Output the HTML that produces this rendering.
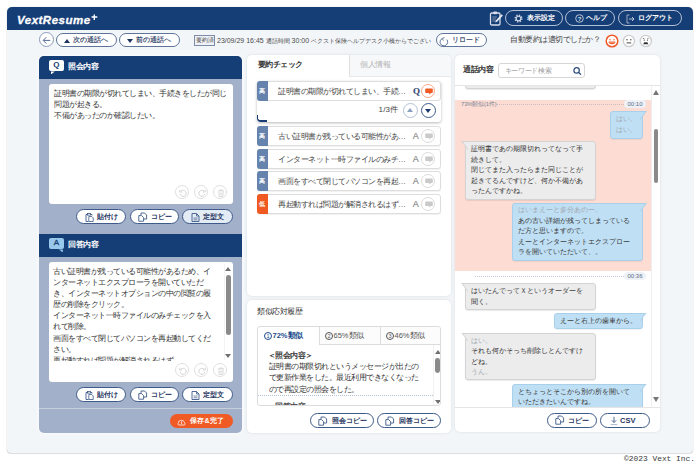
<!DOCTYPE html>
<html><head><meta charset="utf-8">
<style>
*{box-sizing:border-box;margin:0;padding:0}
html,body{width:700px;height:463px;overflow:hidden;background:#fff;font-family:"Liberation Sans",sans-serif;color:#333}
div,span,svg{position:absolute;white-space:nowrap}
.j{font-size:8px;letter-spacing:-0.5px}
#outer{left:7px;top:7px;width:686px;height:445.5px;background:#f3f6f9;border-radius:5px 5px 4px 4px;box-shadow:0 0 1px rgba(0,0,0,.35),0 1px 1px rgba(0,0,0,.1)}
#hdr{left:7px;top:7px;width:686px;height:22.5px;background:#163e76;border-radius:5px 5px 0 0}
.logo{left:17px;top:14.5px;font:italic bold 11.5px/11.5px "Liberation Sans",sans-serif;color:#fff;letter-spacing:0.5px;-webkit-text-stroke:0.3px #fff}
.hbtn{top:10px;height:16px;border:1.2px solid #b4c0d4;border-radius:8px;color:#fff;font-size:7px;font-weight:bold;line-height:13.6px}
.tbtn{top:33px;height:14px;border:1px solid #5f7499;border-radius:8px;background:#fff;color:#1f3560;font-size:7px;line-height:12px;-webkit-text-stroke:0.15px #1f3560}
.panel{background:#a2b1c9;border-radius:5px;overflow:hidden;box-shadow:0 0 4px rgba(255,255,255,.9)}
.ph{left:0;width:203px;height:23px;background:#163e76;color:#fff;font-size:8px;font-weight:bold;letter-spacing:-0.3px}
.ph .t{left:29px;top:5.5px;line-height:10px}
.ico{left:9.9px;top:4.4px;width:15px;height:11px;border-radius:2px;font-size:8px;font-weight:bold;text-align:center;line-height:10.6px;color:#173b72;letter-spacing:0}
.ico:after{content:"";position:absolute;left:2px;bottom:-3px;width:4px;height:3px;background:inherit;clip-path:polygon(0 0,100% 0,0 100%)}
.ico.a:after{left:10px;clip-path:polygon(0 0,100% 0,100% 100%)}
.ta{background:#fff;border-radius:3px;font-size:8px;letter-spacing:-0.5px;line-height:11.1px;color:#333}
.pbtn{height:15px;border:1px solid #3d5a88;border-radius:8px;background:#fff;color:#1f3560;font-size:7px;font-weight:bold;line-height:13px}
.card{background:#fff;border-radius:5px;box-shadow:0 0 3px rgba(0,0,0,.1)}
.uico{width:14px;height:14px;border:1px solid #e0e0e0;border-radius:50%}
.item{left:10px;width:184px;height:20px;border:1px solid #dedede;border-radius:3px;background:#fff;color:#444;box-shadow:0 1px 1px rgba(0,0,0,.06)}
.item .b{left:-1px;top:-1px;width:10.5px;height:20px;background:#6683ad;color:#fff;font-size:6px;text-align:center;line-height:20px;border-radius:3px 0 0 3px;-webkit-text-stroke:0.2px #fff}
.item .tx{left:20px;top:4px;line-height:11px;font-size:8px;letter-spacing:-0.5px}
.item .qa{left:154.8px;top:3.3px;line-height:11px;color:#8c8c8c;font-size:9px;-webkit-text-stroke:0.2px #8c8c8c}
.item .ci{left:163.3px;top:1.7px;width:14px;height:14px;border:1px solid #dcdcdc;border-radius:50%}
.bub{font-size:7px;letter-spacing:0;line-height:10.6px;color:#333;border-radius:3px}
.gb{background:#ececec;border:1px solid #d3d3d3;box-shadow:0 1px 1px rgba(0,0,0,.08)}
.bb{background:#bfdff4;border:1px solid #a9d0ea;box-shadow:0 1px 1px rgba(0,0,0,.06)}
.gr{color:#a0a8b0}
.gb:before{content:"";position:absolute;left:-5px;top:-1px;width:7px;height:9px;background:#d3d3d3;clip-path:polygon(0 0,100% 0,100% 100%)}
.gb:after{content:"";position:absolute;left:-3px;top:0;width:5px;height:7px;background:#ececec;clip-path:polygon(0 0,100% 0,100% 100%)}
.bb:before{content:"";position:absolute;right:-5px;top:-1px;width:7px;height:9px;background:#a9d0ea;clip-path:polygon(0 0,100% 0,0 100%)}
.bb:after{content:"";position:absolute;right:-3px;top:0;width:5px;height:7px;background:#bfdff4;clip-path:polygon(0 0,100% 0,0 100%)}
.sb{width:7px}
</style></head><body>
<div id="outer"></div>
<div id="hdr"></div>
<div class="logo">VextResume</div>
<svg style="left:91px;top:14px" width="7" height="7" viewBox="0 0 7 7"><path d="M3.3 0.5v5.5M0.5 3h5.8" stroke="#fff" stroke-width="1.4"/></svg>

<!-- header right -->
<svg style="left:488.5px;top:11px" width="15" height="15" viewBox="0 0 15 15"><rect x="1.5" y="2" width="9.5" height="12" rx="1.2" fill="none" stroke="#d6dde8" stroke-width="1.3"/><rect x="4.2" y="0.6" width="4" height="2.6" rx="1" fill="#d6dde8"/><path d="M3.3 6h4.5M3.3 8h3.5M3.3 10h3" stroke="#8d9bb3" stroke-width="0.9"/><path d="M6.2 11.5l0.6-2 5.8-6.2 1.3 1.2-5.8 6.2z" fill="#e6ebf2"/></svg>
<div class="hbtn" style="left:505px;width:58px"><svg style="left:7.5px;top:2.6px" width="9" height="9" viewBox="0 0 9 9"><circle cx="4.5" cy="4.5" r="3.3" fill="none" stroke="#cdd6e3" stroke-width="1.5" stroke-dasharray="1.3 1.29"/><circle cx="4.5" cy="4.5" r="2.3" fill="none" stroke="#cdd6e3" stroke-width="1.1"/></svg><span style="left:21px;top:0">表示設定</span></div>
<div class="hbtn" style="left:565px;width:50px"><svg style="left:8.5px;top:2.5px" width="9" height="9" viewBox="0 0 9 9"><circle cx="4.5" cy="4.5" r="3.8" fill="none" stroke="#dfe5ee" stroke-width="0.8"/><text x="4.5" y="6.9" font-size="6" text-anchor="middle" fill="#dfe5ee" font-family="Liberation Sans">?</text></svg><span style="left:19.5px;top:0">ヘルプ</span></div>
<div class="hbtn" style="left:618px;width:64px"><svg style="left:7px;top:2.5px" width="10" height="10" viewBox="0 0 10 10"><path d="M3.5 1H1v8h2.5" fill="none" stroke="#b9c4d6" stroke-width="0.8"/><path d="M3 5h5M6 3l2 2-2 2" fill="none" stroke="#dfe5ee" stroke-width="0.8"/></svg><span style="left:19px;top:0">ログアウト</span></div>

<!-- toolbar -->
<div class="tbtn" style="left:38.5px;top:32px;width:15px;height:15px;border-radius:50%;border-color:#8a9bb8"><svg style="left:2.5px;top:2.5px" width="9" height="9" viewBox="0 0 9 9"><path d="M8.3 4.4H1.5M4.3 1.2L1.2 4.4 4.3 7.6" fill="none" stroke="#3d5a88" stroke-width="0.9"/></svg></div>
<div class="tbtn" style="left:56px;width:61px"><svg style="left:7px;top:5px" width="6" height="4" viewBox="0 0 6 4"><path d="M0 4L3 0 6 4z" fill="#1f3560"/></svg><span style="left:15.5px;top:0">次の通話へ</span></div>
<div class="tbtn" style="left:119px;width:61px"><svg style="left:7px;top:5px" width="6" height="4" viewBox="0 0 6 4"><path d="M0 0L6 0 3 4z" fill="#1f3560"/></svg><span style="left:15.5px;top:0">前の通話へ</span></div>
<div style="left:194px;top:35px;width:21px;height:11px;border:1px solid #7d8cab;background:#eef1f6;font-size:6px;line-height:9px;color:#444;text-align:center">要約済</div>
<div style="left:217px;top:35.5px;font-size:7px;line-height:10px;color:#4a4a4a">23/09/29 16:45 <span style="position:static;font-size:6px">通話時間</span> 30:00 <span style="position:static;font-size:6px">ベクスト保険ヘルプデスク小橋からでござい</span></div>
<div class="tbtn" style="left:436px;width:51px"><svg style="left:2px;top:3px" width="10" height="10" viewBox="0 0 10 10"><path d="M7.8 2.6A3.8 3.8 0 1 1 3.4 1.5" fill="none" stroke="#5f7499" stroke-width="1"/><path d="M5.6 0.6L3.2 1.4 4.4 3.6" fill="none" stroke="#5f7499" stroke-width="0.9"/></svg><span style="left:15px;top:0">リロード</span></div>
<div class="j" style="left:510px;top:35px;line-height:10px;color:#444">自動要約は適切でしたか？</div>
<svg style="left:604.5px;top:33.5px" width="48" height="14" viewBox="0 0 48 14">
<circle cx="7" cy="7" r="5.8" fill="#fff" stroke="#ee5a2a" stroke-width="1.5"/><circle cx="5" cy="5.6" r="0.9" fill="#f49a7a"/><circle cx="9" cy="5.6" r="0.9" fill="#f49a7a"/><path d="M3.6 7.6h6.8a3.4 2.6 0 0 1-6.8 0z" fill="#ee5a2a"/><path d="M4.6 8.2h4.8" stroke="#fbd3c3" stroke-width="0.6"/>
<circle cx="23.9" cy="7" r="5.6" fill="#fff" stroke="#cfcfcf" stroke-width="1.4"/><circle cx="22" cy="5.8" r="0.8" fill="#555"/><circle cx="25.8" cy="5.8" r="0.8" fill="#555"/><path d="M21.6 8.9h4.6" stroke="#444" stroke-width="1"/>
<circle cx="40.8" cy="7" r="5.6" fill="#fff" stroke="#cfcfcf" stroke-width="1.4"/><path d="M38 4.3l1.4 0.6M43.6 4.3l-1.4 0.6" stroke="#555" stroke-width="0.8"/><circle cx="39.2" cy="6.2" r="0.6" fill="#555"/><circle cx="42.4" cy="6.2" r="0.6" fill="#555"/><path d="M38.2 10.3l1-2h3.2l1 2z" fill="#333"/>
</svg>

<!-- left panel -->
<div class="panel" style="left:39px;top:56px;width:203px;height:376.5px">
  <div class="ph" style="top:0"><div class="ico" style="background:#fff">Q</div><div class="t">照会内容</div></div>
  <div class="ta" style="left:10px;top:28px;width:183.5px;height:119.5px">
    <div style="left:5px;top:4px">証明書の期限が切れてしまい、手続きをしたが同じ<br>問題が起きる。<br>不備があったのか確認したい。</div>
    <div class="uico" style="left:125.5px;top:101px"><svg style="left:3px;top:3px" width="8" height="8" viewBox="0 0 8 8"><path d="M2 2.2A3 3 0 1 1 1.2 5" fill="none" stroke="#cfcfcf" stroke-width="0.9"/><path d="M0.8 0.8v2.2h2.2" fill="none" stroke="#cfcfcf" stroke-width="0.9"/></svg></div><div class="uico" style="left:144.5px;top:101px"><svg style="left:3px;top:3px" width="8" height="8" viewBox="0 0 8 8"><path d="M6 2.2A3 3 0 1 0 6.8 5" fill="none" stroke="#cfcfcf" stroke-width="0.9"/><path d="M7.2 0.8v2.2H5" fill="none" stroke="#cfcfcf" stroke-width="0.9"/></svg></div><div class="uico" style="left:163.5px;top:101px"><svg style="left:3px;top:2.5px" width="8" height="8" viewBox="0 0 8 8"><path d="M1 1.8h6M3 1.8V0.9h2v0.9M1.8 2.5l0.4 5h3.6l0.4-5" fill="none" stroke="#cfcfcf" stroke-width="0.8"/><path d="M3.3 3.5v2.8M4.7 3.5v2.8" stroke="#cfcfcf" stroke-width="0.6"/></svg></div>
  </div>
  <div class="pbtn" style="left:37px;top:153px;width:50px"><svg style="left:8px;top:2.5px" width="9" height="9" viewBox="0 0 9 9"><path d="M2.5 1.5H1v7h2.5M5.5 1.5H7v1" fill="none" stroke="#3d5a88" stroke-width="0.9"/><rect x="2.5" y="0.5" width="3" height="1.6" fill="none" stroke="#3d5a88" stroke-width="0.8"/><path d="M3.8 3.5h3l1.4 1.4v3.6H3.8z" fill="#fff" stroke="#3d5a88" stroke-width="0.8"/></svg><span style="left:20px;top:0">貼付け</span></div>
  <div class="pbtn" style="left:90.5px;top:153px;width:49px"><svg style="left:7px;top:1.5px" width="10" height="10" viewBox="0 0 10 10"><path d="M3 3V1h3.6L8.6 3v4H6" fill="none" stroke="#3d5a88" stroke-width="0.9"/><path d="M0.8 3.6h2.8l2 2v3.6H0.8z" fill="#fff" stroke="#3d5a88" stroke-width="0.9"/></svg><span style="left:20px;top:0">コピー</span></div>
  <div class="pbtn" style="left:143px;top:153px;width:51px;background:#e3ebf4"><svg style="left:8px;top:3px" width="9" height="9" viewBox="0 0 9 9"><path d="M1 0.5h4.5l2.5 2.5v5.5H1z" fill="none" stroke="#3d5a88" stroke-width="0.9"/><path d="M5.5 0.5v2.5H8" fill="none" stroke="#3d5a88" stroke-width="0.8"/><path d="M2.5 5h4M2.5 6.8h4" stroke="#3d5a88" stroke-width="0.7"/></svg><span style="left:20px;top:0">定型文</span></div>

  <div class="ph" style="top:178px"><div class="ico a" style="background:#98c8ec;font-weight:normal;-webkit-text-stroke:0.3px #173b72">A</div><div class="t">回答内容</div></div>
  <div class="ta" style="left:10px;top:206px;width:183.5px;height:119.5px;overflow:hidden">
    <div style="left:175px;top:2px;width:1px;height:96px;background:#f3f3f3"></div>
    <svg style="left:176px;top:4.5px" width="6" height="4" viewBox="0 0 6 4"><path d="M0 4L3 0 6 4z" fill="#707070"/></svg>
    <div style="left:177px;top:13px;width:4.5px;height:60px;background:#8a8a8a;border-radius:2.5px"></div>
    <svg style="left:176px;top:92px" width="6" height="4" viewBox="0 0 6 4"><path d="M0 0L6 0 3 4z" fill="#707070"/></svg>
    <div style="left:0;top:0;width:176px;height:99px;overflow:hidden"><div style="left:4px;top:4px">古い証明書が残っている可能性があるため、イ<br>ンターネットエクスプローラを開いていただ<br>き、インターネットオプションの中の閲覧の履<br>歴の削除をクリック。<br>インターネット一時ファイルのみチェックを入<br>れて削除。<br>画面をすべて閉じてパソコンを再起動してくだ<br>さい。<br>再起動すれば問題が解消されるはず</div></div>
    <div class="uico" style="left:125.5px;top:101px"><svg style="left:3px;top:3px" width="8" height="8" viewBox="0 0 8 8"><path d="M2 2.2A3 3 0 1 1 1.2 5" fill="none" stroke="#cfcfcf" stroke-width="0.9"/><path d="M0.8 0.8v2.2h2.2" fill="none" stroke="#cfcfcf" stroke-width="0.9"/></svg></div><div class="uico" style="left:144.5px;top:101px"><svg style="left:3px;top:3px" width="8" height="8" viewBox="0 0 8 8"><path d="M6 2.2A3 3 0 1 0 6.8 5" fill="none" stroke="#cfcfcf" stroke-width="0.9"/><path d="M7.2 0.8v2.2H5" fill="none" stroke="#cfcfcf" stroke-width="0.9"/></svg></div><div class="uico" style="left:163.5px;top:101px"><svg style="left:3px;top:2.5px" width="8" height="8" viewBox="0 0 8 8"><path d="M1 1.8h6M3 1.8V0.9h2v0.9M1.8 2.5l0.4 5h3.6l0.4-5" fill="none" stroke="#cfcfcf" stroke-width="0.8"/><path d="M3.3 3.5v2.8M4.7 3.5v2.8" stroke="#cfcfcf" stroke-width="0.6"/></svg></div>
  </div>
  <div class="pbtn" style="left:37px;top:331px;width:50px"><svg style="left:8px;top:2.5px" width="9" height="9" viewBox="0 0 9 9"><path d="M2.5 1.5H1v7h2.5M5.5 1.5H7v1" fill="none" stroke="#3d5a88" stroke-width="0.9"/><rect x="2.5" y="0.5" width="3" height="1.6" fill="none" stroke="#3d5a88" stroke-width="0.8"/><path d="M3.8 3.5h3l1.4 1.4v3.6H3.8z" fill="#fff" stroke="#3d5a88" stroke-width="0.8"/></svg><span style="left:20px;top:0">貼付け</span></div>
  <div class="pbtn" style="left:90.5px;top:331px;width:49px"><svg style="left:7px;top:1.5px" width="10" height="10" viewBox="0 0 10 10"><path d="M3 3V1h3.6L8.6 3v4H6" fill="none" stroke="#3d5a88" stroke-width="0.9"/><path d="M0.8 3.6h2.8l2 2v3.6H0.8z" fill="#fff" stroke="#3d5a88" stroke-width="0.9"/></svg><span style="left:20px;top:0">コピー</span></div>
  <div class="pbtn" style="left:143px;top:331px;width:51px"><svg style="left:8px;top:3px" width="9" height="9" viewBox="0 0 9 9"><path d="M1 0.5h4.5l2.5 2.5v5.5H1z" fill="none" stroke="#3d5a88" stroke-width="0.9"/><path d="M5.5 0.5v2.5H8" fill="none" stroke="#3d5a88" stroke-width="0.8"/><path d="M2.5 5h4M2.5 6.8h4" stroke="#3d5a88" stroke-width="0.7"/></svg><span style="left:20px;top:0">定型文</span></div>
  <div style="left:0;top:351.5px;width:203px;height:1.5px;background:#c6d0dd"></div>
  <div style="left:131px;top:357.5px;width:62.5px;height:14px;background:#f05a24;border-radius:7px;color:#fff;font-size:7px;font-weight:bold;line-height:14px"><svg style="left:7px;top:4px" width="9" height="8" viewBox="0 0 9 8"><path d="M2 7H7.2A1.3 1.3 0 0 0 7.4 4.6 2.8 2.8 0 0 0 3.4 2.6 1.8 1.8 0 0 0 1.6 4.7 1.2 1.2 0 0 0 2 7z" fill="none" stroke="#fff" stroke-width="0.8"/><path d="M4.5 3.2v2.8" stroke="#fff" stroke-width="0.7"/></svg><span style="left:20px;top:0;letter-spacing:0.2px">保存&amp;完了</span></div>
</div>

<!-- middle top card -->
<div class="card" style="left:247px;top:55.3px;width:203.5px;height:241.2px;overflow:hidden">
  <div style="left:102px;top:0;width:102px;height:22px;background:#f7f8fa;border-left:1px solid #e0e0e0;border-bottom:1px solid #e8e8e8"></div>
  <div class="j" style="left:10.5px;top:5px;line-height:10px;font-weight:bold;color:#333">要約チェック</div>
  <div class="j" style="left:113px;top:5px;line-height:10px;color:#b3b3b3">個人情報</div>
  <div style="left:10px;top:26px;width:184px;height:41px;background:#fff;border-radius:3px;box-shadow:0 1px 3px rgba(0,0,0,.28)"></div>
  <div style="left:10px;top:60px;width:10px;height:7px;border-left:1.5px solid #173b72;border-bottom:2px solid #173b72;border-radius:0 0 0 4px"></div>
  <div class="item" style="top:26px;box-shadow:none"><div class="b">高</div><div class="tx">証明書の期限が切れてしまい、手続…</div><div class="qa" style="color:#1b3b6f;font-family:'Liberation Serif',serif;font-size:9px;font-weight:bold;left:155px;top:4px">Q</div><div class="ci" style="border-color:#f6a98a"><svg style="left:2.5px;top:3px" width="8" height="7" viewBox="0 0 8 7"><path d="M1 0.5h6a0.8 0.8 0 0 1 0.8 0.8v3a0.8 0.8 0 0 1-0.8 0.8H5.5l-0.3 1.6-1.4-1.6H1a0.8 0.8 0 0 1-0.8-0.8v-3A0.8 0.8 0 0 1 1 0.5z" fill="#f05a22"/></svg></div></div>
  <div style="left:131.5px;top:50px;line-height:10px;color:#444;font-size:8px"><span style="position:static;letter-spacing:0.2px">1/3</span>件</div>
  <div class="uico" style="left:155.7px;top:47.5px;width:15px;height:15px;border-color:#b3c2d6"><svg style="left:3.5px;top:4.5px" width="6" height="4" viewBox="0 0 6 4"><path d="M0 4L3 0 6 4z" fill="#8aa0bf"/></svg></div>
  <div class="uico" style="left:173.5px;top:47.5px;width:15px;height:15px;border-color:#3d5a88"><svg style="left:3.5px;top:5px" width="6" height="4" viewBox="0 0 6 4"><path d="M0 0L6 0 3 4z" fill="#1b3b6f"/></svg></div>
  <div class="item" style="top:71px"><div class="b">高</div><div class="tx">古い証明書が残っている可能性があ…</div><div class="qa">A</div><div class="ci"><svg style="left:2.5px;top:3px" width="8" height="7" viewBox="0 0 8 7"><path d="M1 0.5h6a0.8 0.8 0 0 1 0.8 0.8v3a0.8 0.8 0 0 1-0.8 0.8H5.5l-0.3 1.6-1.4-1.6H1a0.8 0.8 0 0 1-0.8-0.8v-3A0.8 0.8 0 0 1 1 0.5z" fill="#cacaca"/></svg></div></div>
  <div class="item" style="top:94px"><div class="b">高</div><div class="tx">インターネット一時ファイルのみチ…</div><div class="qa">A</div><div class="ci"><svg style="left:2.5px;top:3px" width="8" height="7" viewBox="0 0 8 7"><path d="M1 0.5h6a0.8 0.8 0 0 1 0.8 0.8v3a0.8 0.8 0 0 1-0.8 0.8H5.5l-0.3 1.6-1.4-1.6H1a0.8 0.8 0 0 1-0.8-0.8v-3A0.8 0.8 0 0 1 1 0.5z" fill="#cacaca"/></svg></div></div>
  <div class="item" style="top:116px"><div class="b">高</div><div class="tx">画面をすべて閉じてパソコンを再起…</div><div class="qa">A</div><div class="ci"><svg style="left:2.5px;top:3px" width="8" height="7" viewBox="0 0 8 7"><path d="M1 0.5h6a0.8 0.8 0 0 1 0.8 0.8v3a0.8 0.8 0 0 1-0.8 0.8H5.5l-0.3 1.6-1.4-1.6H1a0.8 0.8 0 0 1-0.8-0.8v-3A0.8 0.8 0 0 1 1 0.5z" fill="#cacaca"/></svg></div></div>
  <div class="item" style="top:139px"><div class="b" style="background:#f05a22">低</div><div class="tx">再起動すれば問題が解消されるはず…</div><div class="qa">A</div><div class="ci"><svg style="left:2.5px;top:3px" width="8" height="7" viewBox="0 0 8 7"><path d="M1 0.5h6a0.8 0.8 0 0 1 0.8 0.8v3a0.8 0.8 0 0 1-0.8 0.8H5.5l-0.3 1.6-1.4-1.6H1a0.8 0.8 0 0 1-0.8-0.8v-3A0.8 0.8 0 0 1 1 0.5z" fill="#cacaca"/></svg></div></div>
</div>
<!-- middle bottom card -->
<div class="card" style="left:247px;top:300px;width:203.5px;height:132.7px;overflow:hidden">
  <div class="j" style="left:10px;top:7px;line-height:10px;color:#333">類似応対履歴</div>
  <div style="left:10px;top:26px;width:184px;height:80px;border:1px solid #dcdcdc;border-radius:3px;overflow:hidden">
    <div style="left:61px;top:0;width:122px;height:17.5px;background:#fcfcfc;border-left:1px solid #dcdcdc;border-bottom:1px solid #dcdcdc"></div>
    <div style="left:122px;top:0;width:1px;height:17.5px;background:#dcdcdc"></div>
    <div style="left:6px;top:3.5px;line-height:10px;color:#1b4c8c;font-size:7.5px;font-weight:bold"><span style="position:relative;display:inline-block;width:8px;height:8px;border:0.8px solid #1b4c8c;border-radius:50%;font-size:5.5px;line-height:6.6px;text-align:center;vertical-align:-0.5px;margin-right:0.5px;font-weight:normal">1</span>72%<span class="j" style="position:static">類似</span></div>
    <div style="left:67px;top:3.5px;line-height:10px;color:#555;font-size:7.5px"><span style="position:relative;display:inline-block;width:8px;height:8px;border:0.8px solid #555;border-radius:50%;font-size:5.5px;line-height:6.6px;text-align:center;vertical-align:-0.5px;margin-right:0.5px;font-weight:normal">2</span>65%<span class="j" style="position:static">類似</span></div>
    <div style="left:128px;top:3.5px;line-height:10px;color:#555;font-size:7.5px"><span style="position:relative;display:inline-block;width:8px;height:8px;border:0.8px solid #555;border-radius:50%;font-size:5.5px;line-height:6.6px;text-align:center;vertical-align:-0.5px;margin-right:0.5px;font-weight:normal">3</span>46%<span class="j" style="position:static">類似</span></div>
    <div style="left:0;top:18px;width:175px;height:61px;overflow:hidden">
      <div class="j" style="left:11.5px;top:5px;line-height:11.2px;color:#333"><span style="position:static;margin-left:-2px;-webkit-text-stroke:0.25px #333">＜照会内容＞</span><br><span style="position:static;margin-left:-1px">証明書の期限切れというメッセージが出たの</span><br><span style="position:static;margin-left:-1px">で更新作業をした。最近利用できなくなった</span><br><span style="position:static;margin-left:-1px">ので再設定の照会をした。</span></div>
      <div style="left:0;top:49.5px;width:175px;border-top:1px dotted #b4c0d6"></div>
      <div class="j" style="left:9.5px;top:55.5px;line-height:11.2px;color:#333;-webkit-text-stroke:0.25px #333">＜回答内容＞</div>
    </div>
    <div style="left:174.5px;top:18px;width:1px;height:61px;background:#f2f2f2"></div>
    <svg style="left:176.5px;top:23px" width="6" height="4" viewBox="0 0 6 4"><path d="M0 4L3 0 6 4z" fill="#707070"/></svg>
    <div style="left:176.8px;top:30.8px;width:4.8px;height:15.6px;background:#8a8a8a;border-radius:2.4px"></div>
    <svg style="left:176.5px;top:73px" width="6" height="4" viewBox="0 0 6 4"><path d="M0 0L6 0 3 4z" fill="#707070"/></svg>
  </div>
  <div class="pbtn" style="left:62.5px;top:113px;width:64.5px"><svg style="left:7px;top:1.5px" width="10" height="10" viewBox="0 0 10 10"><path d="M3 3V1h3.6L8.6 3v4H6" fill="none" stroke="#3d5a88" stroke-width="0.9"/><path d="M0.8 3.6h2.8l2 2v3.6H0.8z" fill="#fff" stroke="#3d5a88" stroke-width="0.9"/></svg><span style="left:21px;top:0">照会コピー</span></div>
  <div class="pbtn" style="left:130px;top:113px;width:64px"><svg style="left:7px;top:1.5px" width="10" height="10" viewBox="0 0 10 10"><path d="M3 3V1h3.6L8.6 3v4H6" fill="none" stroke="#3d5a88" stroke-width="0.9"/><path d="M0.8 3.6h2.8l2 2v3.6H0.8z" fill="#fff" stroke="#3d5a88" stroke-width="0.9"/></svg><span style="left:21px;top:0">回答コピー</span></div>
</div>
<!-- right card -->
<div class="card" style="left:455px;top:55px;width:205px;height:377px;overflow:hidden">
  <div class="j" style="left:8px;top:9.5px;line-height:10px;color:#333;-webkit-text-stroke:0.3px #333">通話内容</div>
  <div style="left:43px;top:7.5px;width:87px;height:15px;border:1px solid #d6d6d6;border-radius:3px"></div><svg style="left:117.5px;top:12px" width="9" height="8" viewBox="0 0 9 8"><circle cx="3.6" cy="3.4" r="2.7" fill="none" stroke="#2c4a7c" stroke-width="1.2"/><path d="M5.6 5.4l2.4 2.3" stroke="#2c4a7c" stroke-width="1.3"/></svg>
  <div style="left:49.5px;top:10.5px;line-height:10px;color:#a0a0a0;font-size:7px;letter-spacing:-0.3px">キーワード検索</div>
  <div style="left:0;top:30px;width:205px;height:1px;background:#e5e5e5"></div>
  <div style="left:0;top:31px;width:196px;height:321px;overflow:hidden">
    <div class="bub gb" style="left:10px;top:-20px;width:131px;height:23px"></div>
    <div style="left:0;top:14px;width:197px;height:171px;background:#fcdcd3"></div>
    <div style="left:6px;top:15px;font-size:6px;line-height:7px;color:#7a8698;letter-spacing:-0.2px">73%類似(1件)</div>
    <div style="left:42px;top:18px;width:127px;border-top:1px dotted #cdbcbc"></div>
    <div style="left:169px;top:14px;width:22px;height:8px;background:#eef2f7;border-radius:4px;font-size:6px;line-height:8px;color:#5a6a86;text-align:center">00:10</div>
    <div class="bub bb" style="left:155px;top:25px;width:33px;height:28px"><div class="gr" style="left:5px;top:2px">はい。<br>はい。</div></div>
    <div class="bub gb" style="left:10px;top:55px;width:131px;height:59px"><div style="left:5px;top:2px">証明書であの期限切れってなって手<br>続きして。<br>閉じてまた入ったらまた同じことが<br>起きてるんですけど、何か不備があ<br>ったんですかね。</div></div>
    <div class="bub bb" style="left:57px;top:117px;width:131px;height:58px"><div style="left:5px;top:1px"><span class="gr" style="position:static">はいまえーと多分あのー。</span><br>あの古い詳細が残ってしまっている<br>だ方と思いますので。<br>えーとインターネットエクスプロー<br>ラを開いていただいて、。</div></div>
    <div style="left:20px;top:189.5px;width:149px;border-top:1px dotted #c3cbd8"></div>
    <div style="left:169px;top:185.5px;width:22px;height:8px;background:#eef2f7;border-radius:4px;font-size:6px;line-height:8px;color:#5a6a86;text-align:center">00:36</div>
    <div class="bub gb" style="left:10px;top:197px;width:131px;height:27px"><div style="left:5px;top:2px">はいたんでってＸというオーダーを<br>聞く。</div></div>
    <div class="bub bb" style="left:99px;top:226.5px;width:89px;height:16px"><div style="left:5px;top:2px">えーと右上の歯車から。</div></div>
    <div class="bub gb" style="left:10px;top:246.5px;width:131px;height:47px"><div style="left:5px;top:2px"><span class="gr" style="position:static">はい。</span><br>それも何かそっち削除しとんですけ<br>どね。<br><span class="gr" style="position:static">うん。</span></div></div>
    <div class="bub bb" style="left:57px;top:297.5px;width:131px;height:30px"><div style="left:5px;top:2px">とちょっとそこから別の所を開いて<br>いただきたいんですね。</div></div>
  </div>
  <div style="left:196px;top:31px;width:9px;height:321px;background:#fff;border-left:1px solid #eeeeee"></div>
  <svg style="left:198px;top:35px" width="6" height="5" viewBox="0 0 6 5"><path d="M0 5L3 0 6 5z" fill="#777"/></svg>
  <div style="left:199px;top:74px;width:4px;height:54px;background:#8a8a8a;border-radius:2px"></div>
  <svg style="left:198px;top:342px" width="6" height="5" viewBox="0 0 6 5"><path d="M0 0L6 0 3 5z" fill="#777"/></svg>
  <div style="left:0;top:352px;width:205px;height:1px;background:#e5e5e5"></div>
  <div class="pbtn" style="left:92px;top:357.5px;width:49.5px"><svg style="left:7px;top:1.5px" width="10" height="10" viewBox="0 0 10 10"><path d="M3 3V1h3.6L8.6 3v4H6" fill="none" stroke="#3d5a88" stroke-width="0.9"/><path d="M0.8 3.6h2.8l2 2v3.6H0.8z" fill="#fff" stroke="#3d5a88" stroke-width="0.9"/></svg><span style="left:20px;top:0">コピー</span></div>
  <div class="pbtn" style="left:145px;top:357.5px;width:50px"><svg style="left:8.5px;top:2px" width="8" height="10" viewBox="0 0 8 10"><path d="M4 0.8v5.5M1.8 4.3L4 6.5 6.2 4.3" fill="none" stroke="#3d5a88" stroke-width="0.9"/><path d="M0.8 8.6h6.4" stroke="#8fa2c0" stroke-width="0.8"/></svg><span style="left:19px;top:0;font-size:7.5px">CSV</span></div>
</div>

<div style="left:624px;top:454px;font:7.9px/10px 'Liberation Mono',monospace;color:#3a3a3a">©2023 Vext Inc.</div>
</body></html>
